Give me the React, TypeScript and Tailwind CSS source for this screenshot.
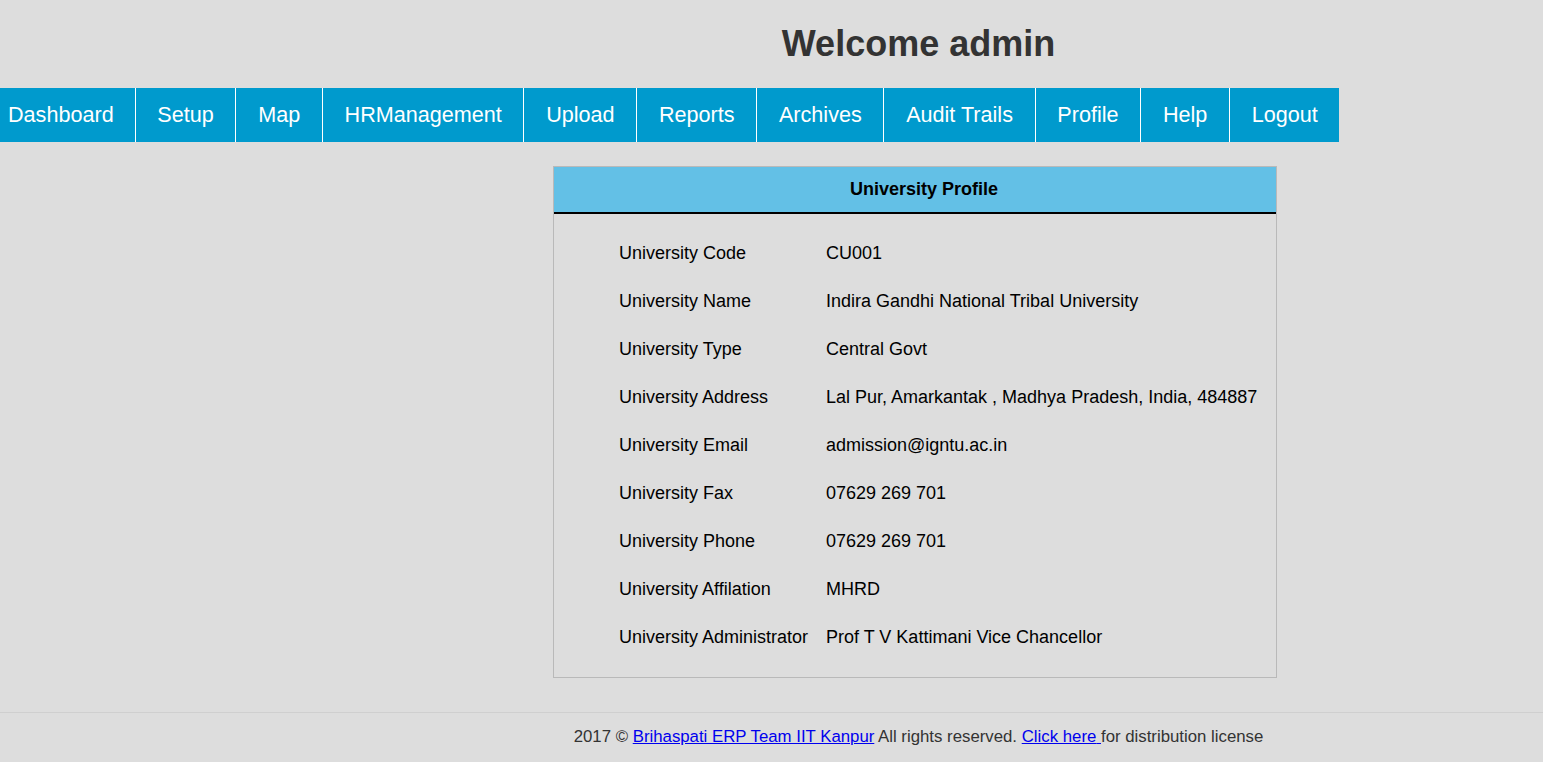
import React from "react";

const menu = [
  "Dashboard",
  "Setup",
  "Map",
  "HRManagement",
  "Upload",
  "Reports",
  "Archives",
  "Audit Trails",
  "Profile",
  "Help",
  "Logout",
];

const profile: [string, string][] = [
  ["University Code", "CU001"],
  ["University Name", "Indira Gandhi National Tribal University"],
  ["University Type", "Central Govt"],
  ["University Address", "Lal Pur, Amarkantak , Madhya Pradesh, India, 484887"],
  ["University Email", "admission@igntu.ac.in"],
  ["University Fax", "07629 269 701"],
  ["University Phone", "07629 269 701"],
  ["University Affilation", "MHRD"],
  ["University Administrator", "Prof T V Kattimani Vice Chancellor"],
];

export default function App() {
  return (
    <div
      className="min-h-screen bg-[#dddddd] text-black"
      style={{ fontFamily: '"Liberation Sans", Arial, sans-serif' }}
    >
      {/* header */}
      <div className="h-[88px] flex items-center justify-center pl-[294px]">
        <h1 className="text-[36px] font-bold text-[#333333] leading-none">
          Welcome admin
        </h1>
      </div>

      {/* menu */}
      <div className="flex h-[54px]">
        <ul className="flex bg-[#009acd]">
          {menu.map((m, i) => (
            <li
              key={m}
              className={`flex items-center text-white text-[21.6px] border-r border-white h-full ${
                i === 0 ? "pl-2 pr-[21px]" : "px-[21.7px]"
              } ${i === menu.length - 1 ? "border-r-0" : ""}`}
            >
              {m}
            </li>
          ))}
        </ul>
      </div>

      {/* content */}
      <div className="pt-6 pb-[34px] pl-[553px]">
        <div className="w-[724px] border border-[#b9b9b9]">
          <div className="h-[47px] bg-[#63c0e6] border-b-2 border-black flex items-center justify-center pl-[18px]">
            <span className="text-[18px] font-bold">University Profile</span>
          </div>
          <div className="pt-[15px] pb-[16px] pl-[65px]">
            {profile.map(([k, v]) => (
              <div key={k} className="flex h-12 items-center text-[18px]">
                <div className="w-[207px]">{k}</div>
                <div>{v}</div>
              </div>
            ))}
          </div>
        </div>
      </div>

      {/* footer */}
      <div className="border-t border-[#cfcfcf] h-[49px] flex items-center justify-center pl-[294px] text-[16.8px] text-[#333333]">
        <span>
          2017 ©{" "}
          <a href="#" className="text-[#0000ee] underline">
            Brihaspati ERP Team IIT Kanpur
          </a>{" "}
          All rights reserved.{" "}
          <a href="#" className="text-[#0000ee] underline">
            Click here{" "}
          </a>
          for distribution license
        </span>
      </div>
    </div>
  );
}
